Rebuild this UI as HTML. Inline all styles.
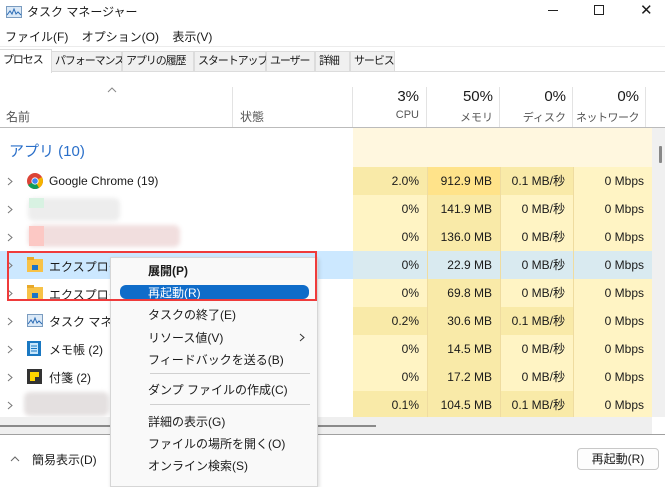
<!DOCTYPE html>
<html><head><meta charset="utf-8"><style>
*{margin:0;padding:0;box-sizing:border-box}
body{width:665px;height:479px;overflow:hidden;background:#fff;font-family:"Liberation Sans","Noto Sans CJK JP",sans-serif;font-size:12px;color:#1a1a1a;position:relative}
.a{position:absolute;white-space:nowrap}
.tab{position:absolute;top:51px;height:21px;background:#f0f0f0;border:1px solid #dcdcdc;font-size:11px;line-height:19px;padding-left:3px;white-space:nowrap;letter-spacing:-1.1px}
.r{position:absolute;left:0;width:652px;height:28px}
.c{position:absolute;top:0;height:28px;line-height:28px;text-align:right;padding-right:8px;font-size:12px}
.chev{position:absolute;left:7px}
.mi{position:absolute;left:148px;font-size:12px}
</style></head><body>
<svg class="a" style="left:6px;top:6px" width="16" height="12"><rect x="0.5" y="0.5" width="15" height="11" fill="#dbe9f7" stroke="#7a9cc0"/><path d="M1 9 L4 5 L6 8 L8 3 L10 8 L12 6 L15 9" stroke="#2a6bb5" fill="none"/></svg>
<div class="a" style="left:27px;top:3px;font-size:12px">タスク マネージャー</div>
<div class="a" style="left:548px;top:10px;width:10px;border-top:1px solid #222"></div>
<div class="a" style="left:594px;top:5px;width:10px;height:10px;border:1px solid #222"></div>
<div class="a" style="left:640px;top:1px;font-size:15px">✕</div>
<div class="a" style="left:5px;top:28px">ファイル(F)&nbsp;&nbsp;&nbsp;&nbsp;オプション(O)&nbsp;&nbsp;&nbsp;&nbsp;表示(V)</div>
<div class="a" style="left:0;top:46px;width:665px;height:1px;background:#ececec"></div>
<div class="a" style="left:0;top:71px;width:665px;height:1px;background:#dcdcdc"></div>
<div class="tab" style="left:51px;width:71px">パフォーマンス</div>
<div class="tab" style="left:122px;width:72px">アプリの履歴</div>
<div class="tab" style="left:194px;width:72px">スタートアップ</div>
<div class="tab" style="left:266px;width:49px">ユーザー</div>
<div class="tab" style="left:315px;width:35px">詳細</div>
<div class="tab" style="left:350px;width:45px">サービス</div>
<div class="tab" style="left:0;top:49px;width:52px;height:24px;background:#fff;border-bottom:none;border-left:none;line-height:21px">プロセス</div>
<svg class="a" style="left:107px;top:87px" width="10" height="6"><path d="M1 5 L5 1 L9 5" stroke="#888" fill="none"/></svg>
<div class="a" style="left:6px;top:108px;color:#555">名前</div>
<div class="a" style="left:240px;top:108px;color:#555">状態</div>
<div class="a" style="left:232px;top:87px;width:1px;height:40px;background:#e3e3e3"></div>
<div class="a" style="left:352px;top:87px;width:1px;height:40px;background:#e3e3e3"></div>
<div class="a" style="left:426px;top:87px;width:1px;height:40px;background:#e3e3e3"></div>
<div class="a" style="left:499px;top:87px;width:1px;height:40px;background:#e3e3e3"></div>
<div class="a" style="left:572px;top:87px;width:1px;height:40px;background:#e3e3e3"></div>
<div class="a" style="left:645px;top:87px;width:1px;height:40px;background:#e3e3e3"></div>
<div class="a" style="left:353px;top:88px;width:66px;text-align:right;font-size:15px">3%</div>
<div class="a" style="left:427px;top:88px;width:66px;text-align:right;font-size:15px">50%</div>
<div class="a" style="left:500px;top:88px;width:66px;text-align:right;font-size:15px">0%</div>
<div class="a" style="left:573px;top:88px;width:66px;text-align:right;font-size:15px">0%</div>
<div class="a" style="left:353px;top:109px;width:66px;text-align:right;color:#555;font-size:11px">CPU</div>
<div class="a" style="left:427px;top:109px;width:66px;text-align:right;color:#555;font-size:11px">メモリ</div>
<div class="a" style="left:500px;top:109px;width:66px;text-align:right;color:#555;font-size:11px">ディスク</div>
<div class="a" style="left:573px;top:109px;width:66px;text-align:right;color:#555;font-size:11px;letter-spacing:-0.5px">ネットワーク</div>
<div class="a" style="left:0;top:127px;width:665px;height:1px;background:#bbb"></div>
<div class="a" style="left:652px;top:128px;width:13px;height:289px;background:#f0f0f0"></div>
<div class="a" style="left:659px;top:146px;width:3px;height:17px;background:#888;border-radius:1px"></div>
<div class="a" style="left:353px;top:128px;width:299px;height:39px;background:#fff7df"></div>
<div class="a" style="left:9px;top:140px;color:#2a6fc9;font-size:15px">アプリ (10)</div>
<div class="a" style="left:353px;top:167px;width:299px;height:250px;background:#fff4c4"></div>
<div class="a" style="left:427px;top:167px;width:73px;height:250px;background:#f9eaa8"></div>
<div id="rows"></div>
<script>
var rows=[
["2.0%","912.9 MB","0.1 MB/秒","0 Mbps",[1,2,1]],
["0%","141.9 MB","0 MB/秒","0 Mbps",[0,1,0]],
["0%","136.0 MB","0 MB/秒","0 Mbps",[0,1,0]],
["0%","22.9 MB","0 MB/秒","0 Mbps",[0,1,0]],
["0%","69.8 MB","0 MB/秒","0 Mbps",[0,1,0]],
["0.2%","30.6 MB","0.1 MB/秒","0 Mbps",[1,1,1]],
["0%","14.5 MB","0 MB/秒","0 Mbps",[0,1,0]],
["0%","17.2 MB","0 MB/秒","0 Mbps",[0,1,0]],
["0.1%","104.5 MB","0.1 MB/秒","0 Mbps",[1,1,1]]];
var bg=["#fff4c4","#f9eaa8","#ffe38a"],h="";
var L=[353,427,500,573],W=[74,73,73,79];
rows.forEach(function(r,i){var t=167+i*28;
 if(i==3)h+='<div class="r" style="top:'+t+'px;background:#cce8ff"></div>';
 for(var j=0;j<4;j++){var b=j<3?bg[r[4][j]]:bg[0];if(i==3)b="#d9eaf0";
 h+='<div class="c" style="top:'+t+'px;left:'+L[j]+'px;width:'+W[j]+'px;background:'+b+(j>0?';border-left:1px solid #efdca0':'')+'">'+r[j]+'</div>';}
 h+='<svg class="chev" style="top:'+(t+10)+'px" width="6" height="9"><path d="M1 1 L5 4.5 L1 8" stroke="#777" fill="none"/></svg>';});
document.getElementById("rows").innerHTML=h;
</script>
<svg class="a" style="left:27px;top:173px" width="16" height="16" viewBox="0 0 16 16"><circle cx="8" cy="8" r="8" fill="#db4437"/><path d="M8 8 L1.1 12 A8 8 0 0 0 12 14.9Z" fill="#0f9d58"/><path d="M8 8 L12 14.9 A8 8 0 0 0 14.9 4Z" fill="#f4b400"/><circle cx="8" cy="8" r="3.6" fill="#fff"/><circle cx="8" cy="8" r="2.8" fill="#4285f4"/></svg>
<div class="a" style="left:49px;top:174px">Google Chrome (19)</div>
<div class="a" style="left:28px;top:198px;width:92px;height:23px;background:#ededed;border-radius:6px;filter:blur(2px)"></div>
<div class="a" style="left:29px;top:198px;width:15px;height:10px;background:#d8f2e2"></div>
<div class="a" style="left:28px;top:225px;width:152px;height:22px;background:#f1dede;border-radius:6px;filter:blur(2px)"></div>
<div class="a" style="left:29px;top:226px;width:15px;height:20px;background:#fcc8c4"></div>
<svg class="a" style="left:27px;top:257px" width="16" height="15"><rect x="0" y="2" width="16" height="13" fill="#f7c247"/><rect x="0" y="0" width="7" height="3" fill="#e8a92a"/><rect x="5" y="8" width="6" height="5" fill="#1a73c9"/></svg>
<div class="a" style="left:49px;top:258px">エクスプローラー</div>
<svg class="a" style="left:27px;top:285px" width="16" height="15"><rect x="0" y="2" width="16" height="13" fill="#f7c247"/><rect x="0" y="0" width="7" height="3" fill="#e8a92a"/><rect x="5" y="8" width="6" height="5" fill="#1a73c9"/></svg>
<div class="a" style="left:49px;top:286px">エクスプローラー</div>
<svg class="a" style="left:27px;top:314px" width="16" height="13"><rect x="0.5" y="0.5" width="15" height="12" fill="#dbe9f7" stroke="#7a9cc0"/><path d="M1 10 L4 6 L6 9 L8 4 L10 9 L12 7 L15 10" stroke="#2a6bb5" fill="none"/></svg>
<div class="a" style="left:49px;top:313px">タスク マネージャー</div>
<svg class="a" style="left:27px;top:341px" width="14" height="15"><rect width="14" height="15" fill="#1a78c2"/><rect x="3" y="2" width="8" height="11" fill="#c8e6fb"/><path d="M4 5h6M4 7.5h6M4 10h6" stroke="#1a78c2"/></svg>
<div class="a" style="left:49px;top:341px">メモ帳 (2)</div>
<svg class="a" style="left:27px;top:369px" width="15" height="15"><rect width="15" height="15" fill="#333"/><rect x="3" y="3" width="9" height="9" fill="#ffd500"/><rect x="8" y="8" width="4" height="4" fill="#333"/></svg>
<div class="a" style="left:49px;top:369px">付箋 (2)</div>
<div class="a" style="left:24px;top:392px;width:85px;height:24px;background:#e4e0e0;border-radius:6px;filter:blur(2px)"></div>
<div class="a" style="left:0;top:417px;width:652px;height:17px;background:#efefef"></div>
<div class="a" style="left:0;top:425px;width:376px;height:2px;background:#8a8a8a"></div>
<div class="a" style="left:0;top:434px;width:665px;height:1px;background:#a0a0a0"></div>
<svg class="a" style="left:10px;top:456px" width="10" height="6"><path d="M1 5 L5 1 L9 5" stroke="#666" fill="none"/></svg>
<div class="a" style="left:32px;top:451px;font-size:12px">簡易表示(D)</div>
<div class="a" style="left:577px;top:448px;width:82px;height:22px;border:1px solid #c8c8c8;border-radius:4px;background:#fdfdfd;text-align:center;line-height:20px">再起動(R)</div>
<div class="a" style="left:110px;top:257px;width:208px;height:230px;background:#f9f9f9;border:1px solid #d6d6d6;box-shadow:1px 2px 4px rgba(0,0,0,.15)"></div>
<div class="a" style="left:120px;top:285px;width:189px;height:14px;background:#0f6cc9;border-radius:6px"></div>
<div class="mi" style="top:262px;font-weight:bold">展開(P)</div>
<div class="mi" style="top:284px;color:#fff">再起動(R)</div>
<div class="mi" style="top:306px">タスクの終了(E)</div>
<div class="mi" style="top:329px">リソース値(V)</div>
<svg class="a" style="left:299px;top:333px" width="6" height="9"><path d="M1 1 L5 4.5 L1 8" stroke="#333" fill="none"/></svg>
<div class="mi" style="top:351px">フィードバックを送る(B)</div>
<div class="a" style="left:150px;top:373px;width:160px;height:1px;background:#d0d0d0"></div>
<div class="mi" style="top:381px">ダンプ ファイルの作成(C)</div>
<div class="a" style="left:150px;top:404px;width:160px;height:1px;background:#d0d0d0"></div>
<div class="mi" style="top:413px">詳細の表示(G)</div>
<div class="mi" style="top:435px">ファイルの場所を開く(O)</div>
<div class="mi" style="top:457px">オンライン検索(S)</div>
<div class="a" style="left:7px;top:251px;width:310px;height:50px;border:2px solid #ef3b3b"></div>
</body></html>
